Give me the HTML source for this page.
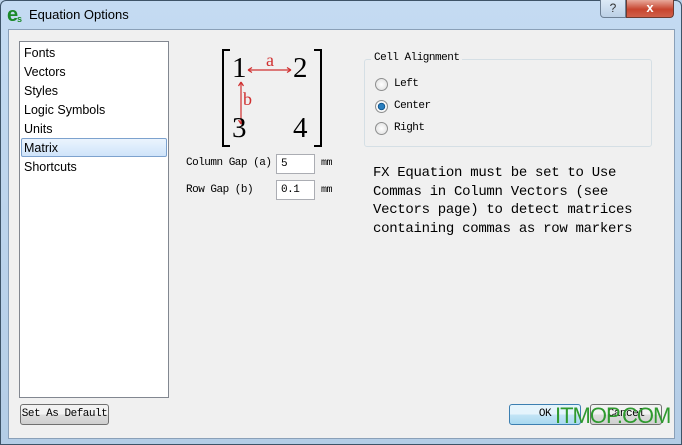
<!DOCTYPE html>
<html><head><style>
*{margin:0;padding:0;box-sizing:border-box}
body{width:682px;height:445px;overflow:hidden;background:#bcd3ea;font-family:"Liberation Sans",sans-serif;position:relative}
.frame{position:absolute;left:0;top:0;width:682px;height:445px;background:linear-gradient(#c4dbf2,#b4cde6);border:1px solid #3e5468;border-radius:6px 6px 0 0}
.title{position:absolute;left:29px;top:7px;font-size:13px;color:#000}
.client{position:absolute;left:8px;top:29px;width:667px;height:410px;background:#f0f0f0;border:1px solid #8aa0b8}
.abs{position:absolute}
.mono{font-family:"Liberation Mono",monospace;font-size:11px;letter-spacing:-0.5px}
.list{left:19px;top:41px;width:150px;height:357px;background:#fff;border:1px solid #828790}
.list div{position:absolute;left:4px;font-size:12.5px;color:#000}
.sel{left:21px;top:138px;width:146px;height:19px;border:1px solid #7da2ce;border-radius:2px;background:linear-gradient(#ebf4fd,#cfe4fa)}
.btn{border:1px solid #707070;border-radius:3px;background:linear-gradient(#f2f2f2 50%,#dddddd 50%,#cfcfcf);text-align:center;line-height:19px}
.inp{background:#fff;border:1px solid #abadb3;height:20px;padding-left:4px;line-height:18px}
.radio{width:13px;height:13px;border-radius:50%;border:1px solid #8e8f8f;background:radial-gradient(#fff,#dcdcdc)}
.serif{font-family:"Liberation Serif",serif;font-size:29px;color:#000}
</style></head><body>
<div class="frame"></div>
<div class="abs" style="left:7px;top:4px;font-size:20px;font-weight:bold;color:#1c8a2a;font-family:'Liberation Sans'">e</div>
<div class="abs" style="left:17px;top:14px;font-size:9px;font-weight:bold;color:#1c8a2a">s</div>
<div class="title">Equation Options</div>
<div class="abs" style="left:600px;top:0;width:26px;height:18px;border:1px solid #6d7f94;border-top:none;border-radius:0 0 0 4px;background:linear-gradient(#dce9f6,#bcd0e6);text-align:center;font-size:12px;line-height:16px;color:#333">?</div>
<div class="abs" style="left:626px;top:0;width:48px;height:18px;border:1px solid #6d3a30;border-top:none;border-radius:0 0 4px 0;background:linear-gradient(#e8a99b,#c7452f 55%,#d0604a);text-align:center;font-size:13px;font-weight:bold;line-height:16px;color:#fff">x</div>
<div class="client"></div>
<div class="abs list">
<div style="top:4px">Fonts</div><div style="top:23px">Vectors</div><div style="top:42px">Styles</div><div style="top:61px">Logic Symbols</div><div style="top:80px">Units</div><div style="top:118px">Shortcuts</div>
</div>
<div class="abs sel"></div>
<div class="abs" style="left:24px;top:141px;font-size:12.5px">Matrix</div>
<svg class="abs" style="left:218px;top:48px" width="110" height="100">
<path d="M12 2H5V98H12M96 2H103V98H96" fill="none" stroke="#000" stroke-width="2"/>
<path d="M30 22H73M30 22l4-2.5M30 22l4 2.5M73 22l-4-2.5M73 22l-4 2.5M23 34V76M23 34l-2.5 4M23 34l2.5 4M23 76l-2.5-4M23 76l2.5-4" stroke="#d03030" stroke-width="1.2" fill="none"/>
</svg>
<div class="abs serif" style="left:232px;top:52px">1</div>
<div class="abs serif" style="left:293px;top:52px">2</div>
<div class="abs serif" style="left:232px;top:112px">3</div>
<div class="abs serif" style="left:293px;top:112px">4</div>
<div class="abs" style="left:266px;top:50px;font-family:'Liberation Serif',serif;font-size:18px;color:#d03030">a</div>
<div class="abs" style="left:243px;top:89px;font-family:'Liberation Serif',serif;font-size:18px;color:#d03030">b</div>
<div class="abs mono" style="left:186px;top:157px">Column Gap (a)</div>
<div class="abs inp mono" style="left:276px;top:154px;width:39px">5</div>
<div class="abs mono" style="left:321px;top:158px;font-size:10px">mm</div>
<div class="abs mono" style="left:186px;top:184px">Row Gap (b)</div>
<div class="abs inp mono" style="left:276px;top:180px;width:39px">0.1</div>
<div class="abs mono" style="left:321px;top:185px;font-size:10px">mm</div>
<div class="abs" style="left:364px;top:59px;width:288px;height:88px;border:1px solid #d5dfe5;border-radius:3px"></div>
<div class="abs mono" style="left:371px;top:52px;background:#f0f0f0;padding:0 3px">Cell Alignment</div>
<div class="abs radio" style="left:375px;top:78px"></div>
<div class="abs mono" style="left:394px;top:78px">Left</div>
<div class="abs radio" style="left:375px;top:100px;background:radial-gradient(#2a7fc0 30%,#0d4c80 45%,#fff 50%,#ddd)"></div>
<div class="abs mono" style="left:394px;top:100px">Center</div>
<div class="abs radio" style="left:375px;top:122px"></div>
<div class="abs mono" style="left:394px;top:122px">Right</div>
<div class="abs mono" style="left:373px;top:164px;font-size:14px;line-height:18.5px;letter-spacing:-0.3px">FX Equation must be set to Use<br>Commas in Column Vectors (see<br>Vectors page) to detect matrices<br>containing commas as row markers</div>
<div class="abs btn mono" style="left:20px;top:404px;width:89px;height:21px">Set As Default</div>
<div class="abs btn mono" style="left:509px;top:404px;width:72px;height:21px;border-color:#3c7fb1;background:linear-gradient(#e5f4fc 50%,#c4e5f6 50%,#a9d9f0)">OK</div>
<div class="abs btn mono" style="left:590px;top:404px;width:72px;height:21px">Cancel</div>
<div class="abs" style="left:555px;top:403px;font-size:22px;color:#2f9a2f;letter-spacing:-1px">ITMOP.COM</div>
</body></html>
